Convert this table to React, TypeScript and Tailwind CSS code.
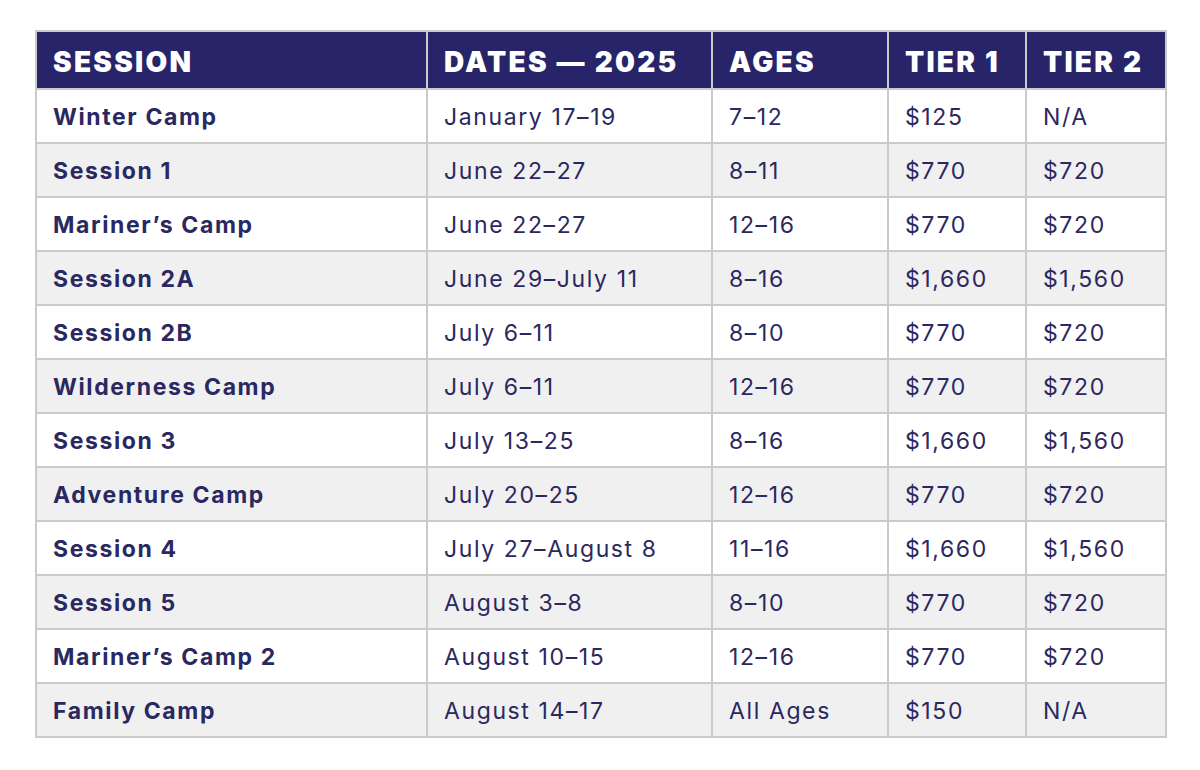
const rows = [
  ["Winter Camp", "January 17–19", "7–12", "$125", "N/A"],
  ["Session 1", "June 22–27", "8–11", "$770", "$720"],
  ["Mariner’s Camp", "June 22–27", "12–16", "$770", "$720"],
  ["Session 2A", "June 29–July 11", "8–16", "$1,660", "$1,560"],
  ["Session 2B", "July 6–11", "8–10", "$770", "$720"],
  ["Wilderness Camp", "July 6–11", "12–16", "$770", "$720"],
  ["Session 3", "July 13–25", "8–16", "$1,660", "$1,560"],
  ["Adventure Camp", "July 20–25", "12–16", "$770", "$720"],
  ["Session 4", "July 27–August 8", "11–16", "$1,660", "$1,560"],
  ["Session 5", "August 3–8", "8–10", "$770", "$720"],
  ["Mariner’s Camp 2", "August 10–15", "12–16", "$770", "$720"],
  ["Family Camp", "August 14–17", "All Ages", "$150", "N/A"],
]

const headers = ["SESSION", "DATES — 2025", "AGES", "TIER 1", "TIER 2"]
const widths = ["w-[391px]", "w-[285px]", "w-[176px]", "w-[138px]", "w-[140px]"]

export default function App() {
  return (
    <div className="w-[1200px] h-[770px] bg-white pt-[30px] pl-[35px] font-['Inter',sans-serif]">
      <table className="border-collapse border-2 border-[#cbcbcb] text-[#2a2860]">
        <thead>
          <tr className="bg-[#272469] h-[58px]">
            {headers.map((h, i) => (
              <th
                key={h}
                className={`${widths[i]} border-2 border-[#cbcbcb] px-[16px] pt-[3px] text-left text-[28px] leading-none font-black tracking-[0.08em] text-white`}
              >
                {h}
              </th>
            ))}
          </tr>
        </thead>
        <tbody>
          {rows.map((r, ri) => (
            <tr key={ri} className={ri % 2 === 0 ? "h-[54px] bg-white" : "h-[54px] bg-[#f0f0f1]"}>
              {r.map((c, ci) => (
                <td
                  key={ci}
                  className={
                    ci === 0
                      ? "border-2 border-[#cbcbcb] px-[16px] pt-[2px] text-[23px] leading-none font-bold tracking-[0.07em]"
                      : "border-2 border-[#cbcbcb] px-[16px] pt-[2px] text-[23px] leading-none font-normal tracking-[0.07em]"
                  }
                >
                  {c}
                </td>
              ))}
            </tr>
          ))}
        </tbody>
      </table>
    </div>
  )
}
